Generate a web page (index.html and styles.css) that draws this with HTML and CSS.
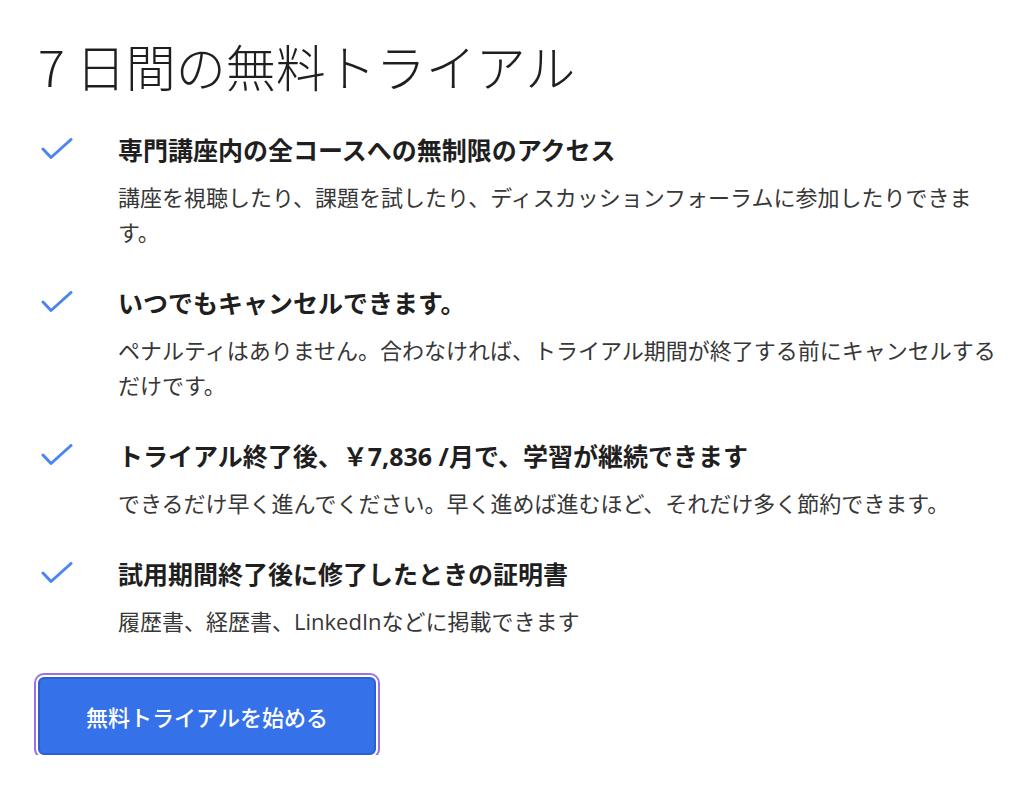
FILE: index.html
```html
<!DOCTYPE html>
<html lang="ja">
<head>
<meta charset="utf-8">
<title>7 日間の無料トライアル</title>
<link rel="stylesheet" href="styles.css">
</head>
<body>
<main class="page">
  <h1 class="heading">7 日間の無料トライアル</h1>
  <ul class="features">
    <li class="feature">
      <svg class="check" viewBox="0 0 32 24" width="32" height="24"><path d="M2 11 L10 19.5 L30 1.5" fill="none" stroke="#4a86ef" stroke-width="3" stroke-linecap="round" stroke-linejoin="round"/></svg>
      <div class="feature-body">
        <div class="feature-title">専門講座内の全コースへの無制限のアクセス</div>
        <p class="feature-desc">講座を視聴したり、課題を試したり、ディスカッションフォーラムに参加したりできます。</p>
      </div>
    </li>
    <li class="feature">
      <svg class="check" viewBox="0 0 32 24" width="32" height="24"><path d="M2 11 L10 19.5 L30 1.5" fill="none" stroke="#4a86ef" stroke-width="3" stroke-linecap="round" stroke-linejoin="round"/></svg>
      <div class="feature-body">
        <div class="feature-title">いつでもキャンセルできます。</div>
        <p class="feature-desc">ペナルティはありません。合わなければ、トライアル期間が終了する前にキャンセルするだけです。</p>
      </div>
    </li>
    <li class="feature">
      <svg class="check" viewBox="0 0 32 24" width="32" height="24"><path d="M2 11 L10 19.5 L30 1.5" fill="none" stroke="#4a86ef" stroke-width="3" stroke-linecap="round" stroke-linejoin="round"/></svg>
      <div class="feature-body">
        <div class="feature-title">トライアル終了後、￥7,836 /月で、学習が継続できます</div>
        <p class="feature-desc">できるだけ早く進んでください。早く進めば進むほど、それだけ多く節約できます。</p>
      </div>
    </li>
    <li class="feature">
      <svg class="check" viewBox="0 0 32 24" width="32" height="24"><path d="M2 11 L10 19.5 L30 1.5" fill="none" stroke="#4a86ef" stroke-width="3" stroke-linecap="round" stroke-linejoin="round"/></svg>
      <div class="feature-body">
        <div class="feature-title">試用期間終了後に修了したときの証明書</div>
        <p class="feature-desc">履歴書、経歴書、LinkedInなどに掲載できます</p>
      </div>
    </li>
  </ul>
  <button class="cta" type="button">無料トライアルを始める</button>
</main>
</body>
</html>
```

FILE: styles.css
```css
* { box-sizing: border-box; }
html, body { margin: 0; padding: 0; background: #fff; }
body {
  font-family: "Open Sans", "Noto Sans CJK JP", sans-serif;
  color: #1f1f1f;
}
.page {
  padding: 30px 0 0 38px;
  width: 1024px;
}
.heading {
  margin: 0;
  font-size: 50px;
  font-weight: 300;
  line-height: 70px;
  color: #1f1f1f;
  font-family: "Noto Sans CJK JP", sans-serif;
}
.features {
  list-style: none;
  margin: 32px 0 0 0;
  padding: 0 0 0 3px;
  display: flex;
  flex-direction: column;
  gap: 35px;
}
.feature {
  display: flex;
  align-items: flex-start;
  gap: 45px;
}
.check {
  flex: none;
  margin-top: 6px;
}
.feature-body {
  flex: 1;
  padding-right: 20px;
}
.feature-title {
  font-size: 25px;
  font-weight: 700;
  line-height: 36px;
  color: #1f1f1f;
}
.feature-desc {
  margin: 12px 0 0 0;
  font-size: 22px;
  line-height: 35px;
  color: #373737;
  max-width: 880px;
}
.cta {
  display: block;
  margin: 38px 0 0 0;
  width: 338px;
  height: 78px;
  background: #3571e8;
  border: 2px solid #2b5fd2;
  border-radius: 6px;
  box-shadow: 0 0 0 2px #fff, 0 0 0 4px #9b6fe8;
  color: #fff;
  font-family: "Noto Sans CJK JP", sans-serif;
  font-size: 22px;
  font-weight: 500;
  padding: 0;
  cursor: pointer;
}
```
